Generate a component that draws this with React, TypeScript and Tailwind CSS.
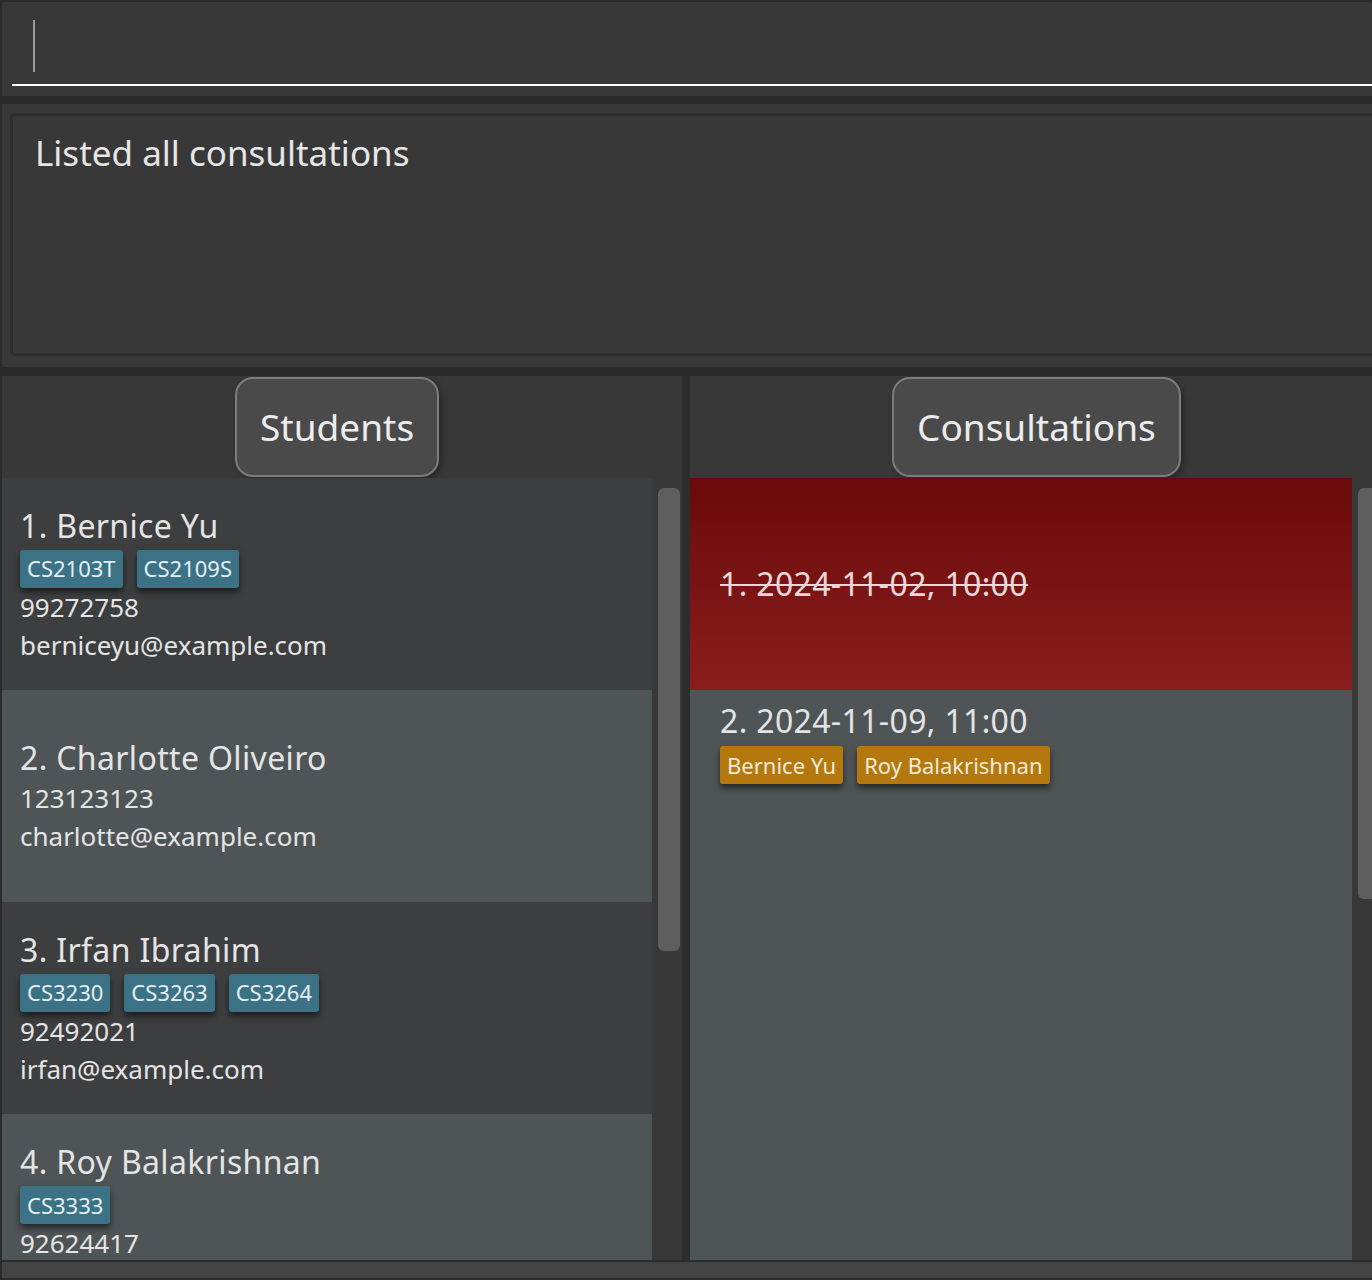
import React from "react";

type Student = { name: string; tags: string[]; phone: string; email?: string };

const students: Student[] = [
  { name: "1. Bernice Yu", tags: ["CS2103T", "CS2109S"], phone: "99272758", email: "berniceyu@example.com" },
  { name: "2. Charlotte Oliveiro", tags: [], phone: "123123123", email: "charlotte@example.com" },
  { name: "3. Irfan Ibrahim", tags: ["CS3230", "CS3263", "CS3264"], phone: "92492021", email: "irfan@example.com" },
  { name: "4. Roy Balakrishnan", tags: ["CS3333"], phone: "92624417" },
];

function StudentCard({ s, i }: { s: Student; i: number }) {
  return (
    <div
      className={`h-[212px] shrink-0 flex flex-col pl-[18px] ${
        s.email ? "justify-center" : "justify-start pt-[27px]"
      } ${i % 2 === 0 ? "bg-[#3c3e40]" : "bg-[#4f5457]"}`}
    >
      <div className="text-[32px] leading-[42px] tracking-[0.35px] text-[#e4e4e4] whitespace-nowrap">{s.name}</div>
      {s.tags.length > 0 && (
        <div className="flex gap-[14px] mt-[3px]">
          {s.tags.map((t) => (
            <div
              key={t}
              className="h-[38px] px-[7px] flex items-center rounded-[3px] bg-[#3b7286] text-[22px] text-[#e6eef2] shadow-[0_4px_6px_rgba(0,0,0,0.55)]"
            >
              {t}
            </div>
          ))}
        </div>
      )}
      <div className="text-[26px] leading-[38px] text-[#e4e4e4]">{s.phone}</div>
      {s.email && <div className="text-[26px] leading-[38px] text-[#e4e4e4]">{s.email}</div>}
    </div>
  );
}

export default function App() {
  return (
    <div className="w-[1372px] h-[1280px] bg-[#2b2b2b] flex flex-col overflow-hidden pl-[2px] pt-[2px] font-['Noto_Sans',sans-serif]">
      {/* command box */}
      <div className="h-[94px] shrink-0 bg-[#383838] rounded-tr-[3px]">
        <div className="ml-[10px] h-[84px] border-b-2 border-white pt-[18px] pl-[21px]">
          <div className="w-[2px] h-[52px] bg-[#9a9a9a]" />
        </div>
      </div>
      <div className="h-[8px] shrink-0" />
      {/* result display */}
      <div className="h-[263px] shrink-0 bg-[#383838] pt-[9px] pl-[8px] overflow-hidden">
        <div className="w-[1420px] h-[243px] border-[3px] border-[#2e2e2e] rounded-[5px] pl-[22px] pt-[11px]">
          <div className="text-[35px] text-[#e6e6e6] leading-normal">Listed all consultations</div>
        </div>
      </div>
      <div className="h-[9px] shrink-0" />
      {/* panes */}
      <div className="h-[884px] shrink-0 flex overflow-hidden">
        {/* students */}
        <div className="w-[680px] shrink-0 flex flex-col bg-[#383838]">
          <div className="h-[102px] shrink-0 pl-[233px] pt-px">
            <div className="inline-flex h-[100px] items-center px-[23px] rounded-[18px] border-2 border-[#7c7c7c] bg-[#4a4a4a] text-[37px] text-[#ececec] shadow-[3px_3px_6px_rgba(0,0,0,0.3)]">
              Students
            </div>
          </div>
          <div className="flex-1 flex min-h-0">
            <div className="w-[650px] shrink-0 flex flex-col overflow-hidden">
              {students.map((s, i) => (
                <StudentCard key={s.name} s={s} i={i} />
              ))}
            </div>
            <div className="w-[30px] shrink-0 bg-[#383838] pl-[6px] pr-[2px] pt-[10px]">
              <div className="w-[22px] h-[463px] rounded-[6px] bg-[#5e5e5e]" />
            </div>
          </div>
        </div>
        {/* divider */}
        <div className="w-[8px] shrink-0 bg-[#2d2d2d]" />
        {/* consultations */}
        <div className="w-[690px] shrink-0 flex flex-col bg-[#383838]">
          <div className="h-[102px] shrink-0 pl-[202px] pt-px">
            <div className="inline-flex h-[100px] items-center px-[23px] rounded-[18px] border-2 border-[#7c7c7c] bg-[#4a4a4a] text-[37px] text-[#ececec] shadow-[3px_3px_6px_rgba(0,0,0,0.3)]">
              Consultations
            </div>
          </div>
          <div className="flex-1 flex min-h-0">
            <div className="w-[662px] shrink-0 flex flex-col">
              <div className="h-[212px] shrink-0 flex items-center pl-[30px] bg-gradient-to-b from-[#6a0a0a] to-[#8a1d1d]">
                <div className="text-[32px] leading-[42px] tracking-[0.35px] text-[#ead8d8] line-through decoration-[2px]">
                  1. 2024-11-02, 10:00
                </div>
              </div>
              <div className="flex-1 bg-[#4f5457] pl-[30px] pt-[10px]">
                <div className="text-[32px] leading-[42px] tracking-[0.35px] text-[#e4e4e4]">2. 2024-11-09, 11:00</div>
                <div className="flex gap-[14px] mt-[4px]">
                  {["Bernice Yu", "Roy Balakrishnan"].map((t) => (
                    <div
                      key={t}
                      className="h-[38px] px-[7px] flex items-center rounded-[3px] bg-[#b5780e] text-[22px] text-[#f2ead8] shadow-[0_4px_6px_rgba(0,0,0,0.55)]"
                    >
                      {t}
                    </div>
                  ))}
                </div>
              </div>
            </div>
            <div className="w-[28px] shrink-0 bg-[#383838] pl-[6px] pt-[10px]">
              <div className="w-[22px] h-[411px] rounded-[6px] bg-[#5e5e5e]" />
            </div>
          </div>
        </div>
      </div>
      <div className="h-[2px] shrink-0" />
      <div className="h-[16px] shrink-0 bg-[#434343]" />
    </div>
  );
}
